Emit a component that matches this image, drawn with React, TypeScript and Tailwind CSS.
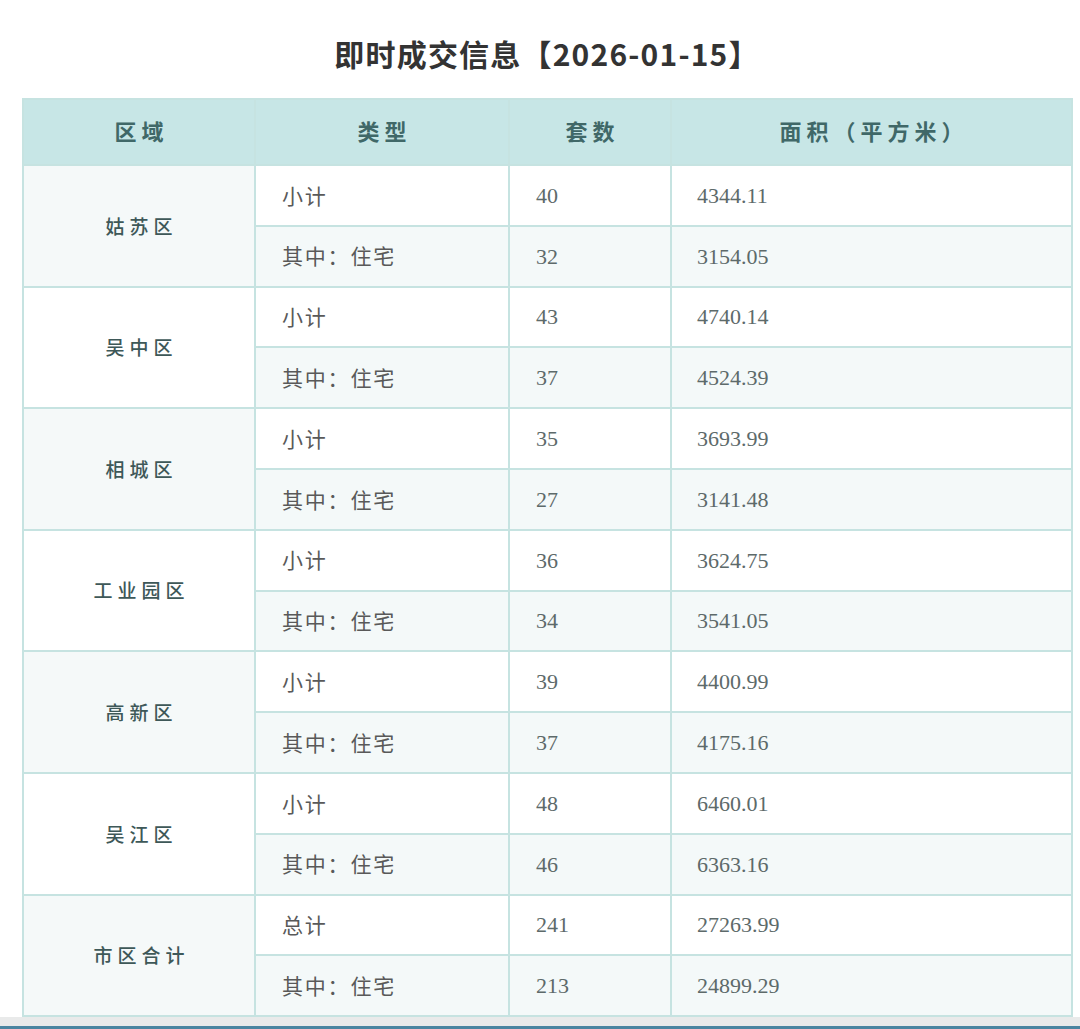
import React from 'react';

type Row = { type: string; count: string; area: string };
type Group = { region: string; rows: Row[] };

const groups: Group[] = [
  { region: '姑苏区', rows: [{ type: '小计', count: '40', area: '4344.11' }, { type: '其中：住宅', count: '32', area: '3154.05' }] },
  { region: '吴中区', rows: [{ type: '小计', count: '43', area: '4740.14' }, { type: '其中：住宅', count: '37', area: '4524.39' }] },
  { region: '相城区', rows: [{ type: '小计', count: '35', area: '3693.99' }, { type: '其中：住宅', count: '27', area: '3141.48' }] },
  { region: '工业园区', rows: [{ type: '小计', count: '36', area: '3624.75' }, { type: '其中：住宅', count: '34', area: '3541.05' }] },
  { region: '高新区', rows: [{ type: '小计', count: '39', area: '4400.99' }, { type: '其中：住宅', count: '37', area: '4175.16' }] },
  { region: '吴江区', rows: [{ type: '小计', count: '48', area: '6460.01' }, { type: '其中：住宅', count: '46', area: '6363.16' }] },
  { region: '市区合计', rows: [{ type: '总计', count: '241', area: '27263.99' }, { type: '其中：住宅', count: '213', area: '24899.29' }] },
];

const sans = "font-['Noto_Sans_CJK_SC','Noto_Sans',sans-serif]";

export default function App() {
  return (
    <div className={`w-[1080px] h-[1029px] bg-white flex flex-col ${sans}`}>
      <div className="h-[98px] flex items-center justify-center pt-[8px] pl-[14px]">
        <h1 className="text-[30px] font-bold text-[#333333] tracking-[1.2px]">即时成交信息【2026-01-15】</h1>
      </div>

      <div className="pl-[22px]">
        <table className="w-[1049px] border-collapse table-fixed border-2 border-[#c6e3e1]">
          <colgroup>
            <col className="w-[232px]" />
            <col className="w-[254px]" />
            <col className="w-[162px]" />
            <col className="w-[401px]" />
          </colgroup>
          <thead>
            <tr className="h-[66px] bg-[#c7e6e6]">
              {['区域', '类型', '套数', '面积（平方米）'].map((h) => (
                <th key={h} className="border-2 border-[#c6e3e1] text-center text-[22px] font-bold text-[#406868] tracking-[5px] pl-[5px] pb-[4px]">
                  {h}
                </th>
              ))}
            </tr>
          </thead>
          <tbody>
            {groups.map((g, gi) =>
              g.rows.map((r, ri) => (
                <tr key={g.region + ri} className={`h-[60.8px] ${ri === 1 ? 'bg-[#f4f9f9]' : 'bg-white'}`}>
                  {ri === 0 && (
                    <td
                      rowSpan={2}
                      className={`border-2 border-[#c6e3e1] text-center text-[19px] font-medium text-[#3e5858] tracking-[5px] pl-[5px] ${gi % 2 === 0 ? 'bg-[#f5f9f9]' : 'bg-white'}`}
                    >
                      {g.region}
                    </td>
                  )}
                  <td className="border-2 border-[#c6e3e1] pl-[26px] text-[21px] text-[#595959] tracking-[1.8px]">{r.type}</td>
                  <td className="border-2 border-[#c6e3e1] pl-[26px] text-[22px] text-[#5d6a6a] font-['Liberation_Serif',serif]">{r.count}</td>
                  <td className="border-2 border-[#c6e3e1] pl-[25px] text-[22px] text-[#5d6a6a] font-['Liberation_Serif',serif]">{r.area}</td>
                </tr>
              ))
            )}
          </tbody>
        </table>
      </div>

      <div className="flex-1 bg-[#e9eaea]" />
      <div className="h-[3px] bg-[#4a84a0]" />
    </div>
  );
}
